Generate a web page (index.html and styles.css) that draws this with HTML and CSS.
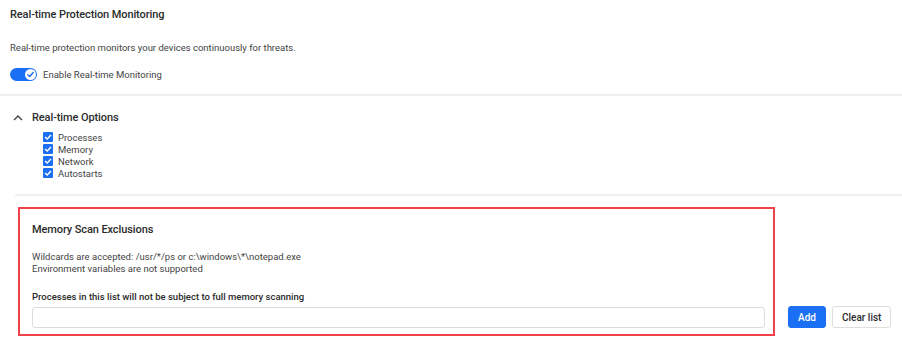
FILE: index.html
```html
<!DOCTYPE html>
<html>
<head>
  <title>Real-time Protection Monitoring</title>
  <link rel="stylesheet" href="styles.css">
</head>
<body>
  <section class="intro">
    <h2 class="page-title">Real-time Protection Monitoring</h2>
    <p class="desc">Real-time protection monitors your devices continuously for threats.</p>
    <label class="toggle-row">
      <span class="toggle">
        <span class="knob">
          <svg width="9" height="9" viewBox="0 0 10 10"><path d="M2 5.2 L4.2 7.2 L8 2.8" fill="none" stroke="#1b6ff5" stroke-width="1.6" stroke-linecap="round" stroke-linejoin="round"/></svg>
        </span>
      </span>
      <span>Enable Real-time Monitoring</span>
    </label>
  </section>

  <hr class="divider">

  <section class="options">
    <div class="options-head">
      <svg class="chevron" width="10" height="6" viewBox="0 0 10 6"><path d="M1 5 L5 1 L9 5" fill="none" stroke="#444" stroke-width="1.4"/></svg>
      <h3>Real-time Options</h3>
    </div>
    <ul class="checks">
      <li><span class="box"></span>Processes</li>
      <li><span class="box"></span>Memory</li>
      <li><span class="box"></span>Network</li>
      <li><span class="box"></span>Autostarts</li>
    </ul>
  </section>

  <hr class="divider inset">

  <div class="exclusion-row">
    <div class="exclusions">
      <h4>Memory Scan Exclusions</h4>
      <p class="hint">Wildcards are accepted: /usr/*/ps or c:\windows\*\notepad.exe<br>Environment variables are not supported</p>
      <p class="field-label">Processes in this list will not be subject to full memory scanning</p>
      <input type="text" class="list-input">
    </div>
    <div class="actions">
      <button class="btn primary">Add</button>
      <button class="btn">Clear list</button>
    </div>
  </div>
</body>
</html>
```

FILE: styles.css
```css
body {
  margin: 0;
  font-family: Roboto, "Liberation Sans", sans-serif;
  color: #444;
  background: #fff;
}

.intro {
  padding: 7px 10px 0 10px;
}

.page-title {
  margin: 0;
  font-size: 11px;
  font-weight: 500;
  letter-spacing: -0.1px;
  color: #2b2b2b;
  line-height: 16px;
}

.desc {
  margin: 18px 0 0 0;
  font-size: 9.5px;
  line-height: 14px;
}

.toggle-row {
  display: flex;
  align-items: center;
  gap: 6px;
  margin-top: 13px;
  font-size: 9.5px;
}

.toggle {
  width: 27px;
  height: 13px;
  border-radius: 7px;
  background: #1b6ff5;
  display: flex;
  align-items: center;
  justify-content: flex-end;
  padding-right: 1px;
  box-sizing: border-box;
}

.knob {
  width: 11px;
  height: 11px;
  border-radius: 50%;
  background: #fff;
  display: flex;
  align-items: center;
  justify-content: center;
}

.divider {
  border: none;
  height: 2px;
  background: #efefef;
  margin: 13px 0 0 0;
}

.divider.inset {
  margin: 15px 0 0 15px;
}

.options {
  padding: 14px 0 0 13px;
}

.options-head {
  display: flex;
  align-items: center;
  gap: 9px;
}

.options-head h3 {
  margin: 0;
  font-size: 11px;
  font-weight: 500;
  letter-spacing: -0.1px;
  color: #2b2b2b;
  line-height: 16px;
}

.checks {
  list-style: none;
  margin: 5px 0 0 30px;
  padding: 0;
  font-size: 9.5px;
}

.checks li {
  display: flex;
  align-items: center;
  gap: 5px;
  height: 12px;
}

.box {
  width: 10px;
  height: 10px;
  border-radius: 1px;
  background: #1b6ff5 url("data:image/svg+xml,%3Csvg xmlns='http://www.w3.org/2000/svg' viewBox='0 0 10 10'%3E%3Cpath d='M2 5 L4.2 7 L8 3' fill='none' stroke='white' stroke-width='1.5'/%3E%3C/svg%3E") center/10px 10px no-repeat;
}

.exclusion-row {
  display: flex;
  align-items: flex-end;
  gap: 13px;
  margin: 11px 0 0 18px;
}

.exclusions {
  width: 757px;
  box-sizing: border-box;
  border: 2px solid #f0424a;
  padding: 13px 8px 6px 12px;
}

.exclusions h4 {
  margin: 0;
  font-size: 11px;
  font-weight: 500;
  letter-spacing: -0.1px;
  color: #2b2b2b;
  line-height: 15px;
}

.hint {
  margin: 14px 0 0 0;
  font-size: 9.5px;
  line-height: 12px;
}

.field-label {
  margin: 15px 0 0 0;
  font-size: 9.5px;
  font-weight: 500;
  color: #2b2b2b;
  line-height: 14px;
}

.list-input {
  display: block;
  width: 100%;
  height: 21px;
  box-sizing: border-box;
  margin-top: 3px;
  border: 1px solid #dcdcdc;
  border-radius: 3px;
}

.actions {
  display: flex;
  gap: 6px;
  margin-bottom: 8px;
}

.btn {
  height: 22px;
  padding: 0 9px;
  white-space: nowrap;
  font-family: Roboto, "Liberation Sans", sans-serif;
  font-size: 10px;
  font-weight: 500;
  color: #2b2b2b;
  background: #fff;
  border: 1px solid #dedede;
  border-radius: 3px;
}

.btn.primary {
  width: 38px;
  padding: 0;
  background: #1b6ff5;
  border-color: #1b6ff5;
  color: #fff;
}
```
